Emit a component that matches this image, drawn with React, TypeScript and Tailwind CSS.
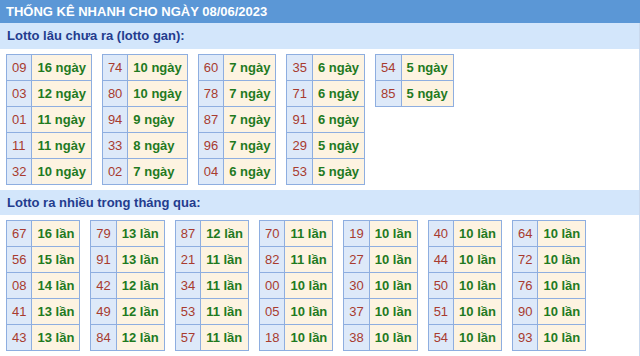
import React from "react";

type Pair = [string, string];

const gan: Pair[][] = [
  [["09", "16 ngày"], ["03", "12 ngày"], ["01", "11 ngày"], ["11", "11 ngày"], ["32", "10 ngày"]],
  [["74", "10 ngày"], ["80", "10 ngày"], ["94", "9 ngày"], ["33", "8 ngày"], ["02", "7 ngày"]],
  [["60", "7 ngày"], ["78", "7 ngày"], ["87", "7 ngày"], ["96", "7 ngày"], ["04", "6 ngày"]],
  [["35", "6 ngày"], ["71", "6 ngày"], ["91", "6 ngày"], ["29", "5 ngày"], ["53", "5 ngày"]],
  [["54", "5 ngày"], ["85", "5 ngày"]],
];

const nhieu: Pair[][] = [
  [["67", "16 lần"], ["56", "15 lần"], ["08", "14 lần"], ["41", "13 lần"], ["43", "13 lần"]],
  [["79", "13 lần"], ["91", "13 lần"], ["42", "12 lần"], ["49", "12 lần"], ["84", "12 lần"]],
  [["87", "12 lần"], ["21", "11 lần"], ["34", "11 lần"], ["53", "11 lần"], ["57", "11 lần"]],
  [["70", "11 lần"], ["82", "11 lần"], ["00", "10 lần"], ["05", "10 lần"], ["18", "10 lần"]],
  [["19", "10 lần"], ["27", "10 lần"], ["30", "10 lần"], ["37", "10 lần"], ["38", "10 lần"]],
  [["40", "10 lần"], ["44", "10 lần"], ["50", "10 lần"], ["51", "10 lần"], ["54", "10 lần"]],
  [["64", "10 lần"], ["72", "10 lần"], ["76", "10 lần"], ["90", "10 lần"], ["93", "10 lần"]],
];

function Box({ rows }: { rows: Pair[] }) {
  return (
    <div className="inline-grid grid-cols-[auto_auto] self-start border-l border-t border-[#8eaee0]">
      {rows.map(([n, v], i) => (
        <React.Fragment key={i}>
          <div className="flex h-[26px] items-center border-b border-r border-[#8eaee0] bg-[#dde9f9] px-[5px] text-[13px] text-[#a83b2f]">
            {n}
          </div>
          <div className="flex h-[26px] items-center border-b border-r border-[#8eaee0] bg-[#fdf3e1] px-[5px] text-[13px] font-bold text-[#1f7a1f]">
            {v}
          </div>
        </React.Fragment>
      ))}
    </div>
  );
}

export default function App() {
  return (
    <div className="h-[356px] w-[640px] overflow-hidden bg-white font-['Liberation_Sans',Arial,sans-serif]">
      <div className="flex h-[23px] items-center bg-[#5b97d6] pl-[6px] text-[13px] font-bold text-white">
        THỐNG KÊ NHANH CHO NGÀY 08/06/2023
      </div>
      <div className="h-[333px] border-r border-[#c9d9ee]">
        <div className="flex h-[26px] items-center bg-[#d3e6fb] pl-[7px] text-[13px] font-bold text-[#233c8e]">
          Lotto lâu chưa ra (lotto gan):
        </div>
        <div className="mt-[5px] flex items-start gap-[10px] pl-[6px]">
          {gan.map((t, i) => (
            <Box key={i} rows={t} />
          ))}
        </div>
        <div className="mt-[5px] flex h-[25px] items-center bg-[#d3e6fb] pl-[7px] text-[13px] font-bold text-[#233c8e]">
          Lotto ra nhiều trong tháng qua:
        </div>
        <div className="mt-[5px] flex items-start gap-[10px] pl-[6px]">
          {nhieu.map((t, i) => (
            <Box key={i} rows={t} />
          ))}
        </div>
      </div>
    </div>
  );
}
